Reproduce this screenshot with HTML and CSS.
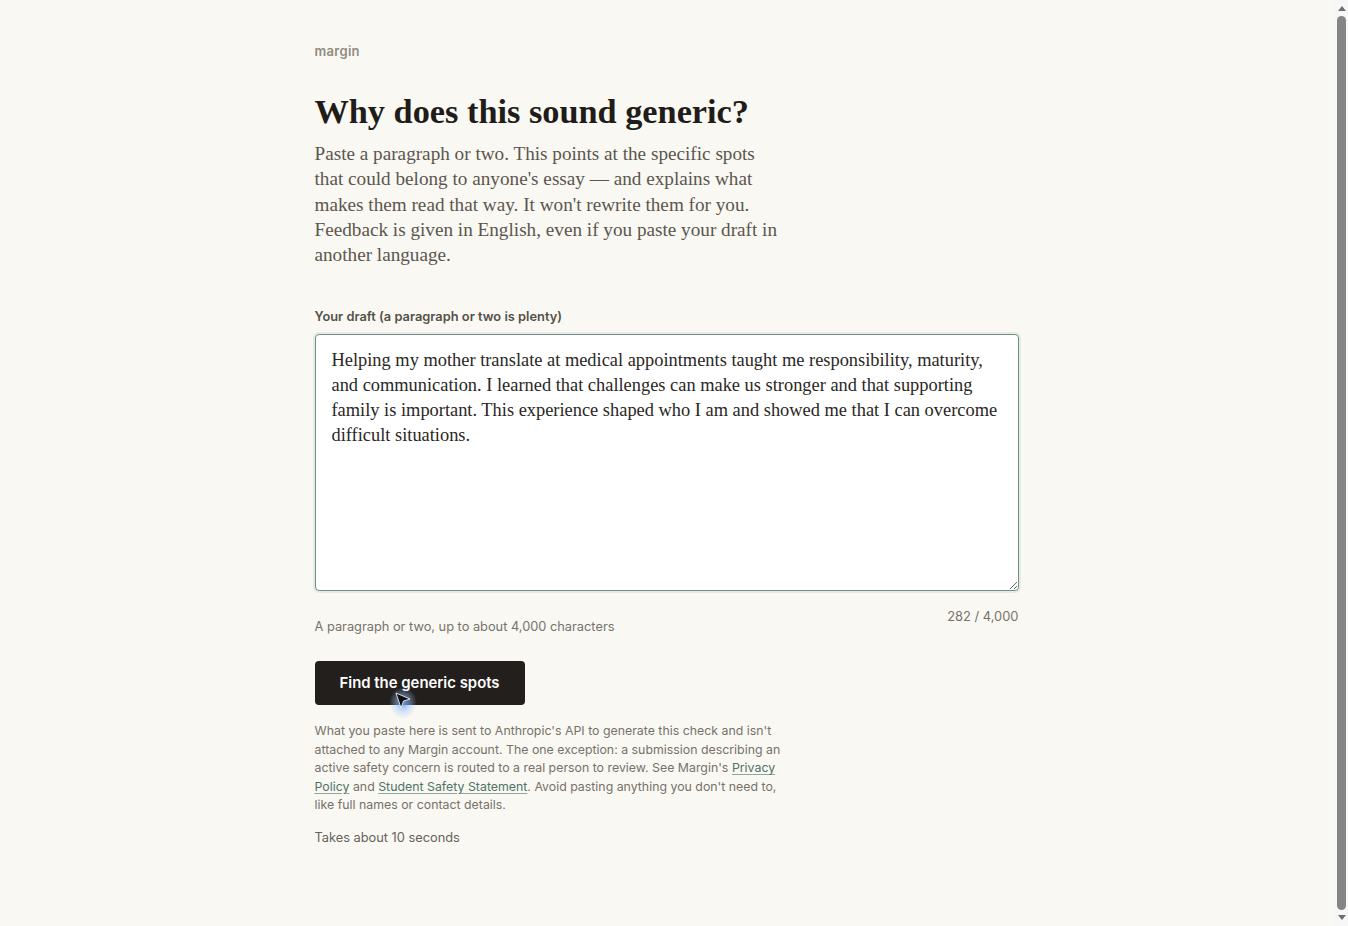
FILE: index.html
```html
<!DOCTYPE html>
<html lang="en">
<head>
<meta charset="utf-8">
<title>Why does this sound generic? — margin</title>
<link rel="stylesheet" href="styles.css">
</head>
<body>
<main class="page">
  <div class="brand">margin</div>
  <h1 class="title">Why does this sound generic?</h1>
  <p class="intro">Paste a paragraph or two. This points at the specific spots that could belong to anyone's essay — and explains what makes them read that way. It won't rewrite them for you. Feedback is given in English, even if you paste your draft in another language.</p>

  <form class="form">
    <label class="label" for="draft">Your draft (a paragraph or two is plenty)</label>
    <textarea id="draft" class="draft">Helping my mother translate at medical appointments taught me responsibility, maturity, and communication. I learned that challenges can make us stronger and that supporting family is important. This experience shaped who I am and showed me that I can overcome difficult situations.</textarea>
    <div class="meta">
      <span class="hint">A paragraph or two, up to about 4,000 characters</span>
      <span class="count">282 / 4,000</span>
    </div>
    <div class="action">
      <button type="button" class="btn">Find the generic spots</button>
      <svg class="pointer" width="30" height="34" viewBox="0 0 30 34" aria-hidden="true">
        <defs>
          <radialGradient id="glow" cx="50%" cy="50%" r="50%">
            <stop offset="0" stop-color="#5d9cff" stop-opacity="0.9"/>
            <stop offset="0.55" stop-color="#9cc4ff" stop-opacity="0.4"/>
            <stop offset="1" stop-color="#9cc4ff" stop-opacity="0"/>
          </radialGradient>
        </defs>
        <ellipse cx="14" cy="17" rx="14" ry="16" fill="url(#glow)"/>
        <path d="M7 7 L21 13 L14.5 15 L12 22 Z" fill="#111" stroke="#fff" stroke-width="0.8" stroke-linejoin="round"/>
      </svg>
    </div>
  </form>

  <p class="privacy">What you paste here is sent to Anthropic's API to generate this check and isn't attached to any Margin account. The one exception: a submission describing an active safety concern is routed to a real person to review. See Margin's <a href="#">Privacy Policy</a> and <a href="#">Student Safety Statement</a>. Avoid pasting anything you don't need to, like full names or contact details.</p>
  <p class="eta">Takes about 10 seconds</p>
</main>
<div class="scrollbar" aria-hidden="true">
  <span class="arrow up"></span>
  <span class="thumb"></span>
  <span class="arrow down"></span>
</div>
</body>
</html>
```

FILE: styles.css
```css
* { box-sizing: border-box; }

html, body {
  margin: 0;
  padding: 0;
  background: #faf8f2;
}

body {
  font-family: Inter, "Liberation Sans", sans-serif;
  color: #222;
  padding-right: 15px;
}

.page {
  max-width: 704px;
  margin: 0 auto;
  padding: 43px 0 90px;
}

.brand {
  font-size: 13px;
  font-weight: 600;
  color: #8f8b82;
  letter-spacing: 0.3px;
  line-height: 16px;
}

.title {
  font-family: "Liberation Serif", serif;
  font-size: 34.3px;
  font-weight: 700;
  color: #1f1c19;
  line-height: 42px;
  margin: 31px 0 0;
}

.intro {
  font-family: "Liberation Serif", serif;
  font-size: 19.2px;
  line-height: 25.3px;
  color: #5a564f;
  max-width: 470px;
  margin: 9px 0 0;
}

.form {
  display: flex;
  flex-direction: column;
  margin-top: 42px;
}

.label {
  font-size: 12.85px;
  font-weight: 600;
  color: #54514b;
  line-height: 16px;
  margin-bottom: 9px;
}

.draft {
  display: block;
  width: 100%;
  height: 257px;
  padding: 13px 16px;
  font-family: "Liberation Serif", serif;
  font-size: 18.4px;
  line-height: 24.7px;
  color: #2a2724;
  background: #fff;
  border: 1px solid #6e9088;
  border-radius: 4px;
  box-shadow: 0 0 0 2px rgba(110, 144, 136, 0.12);
  outline: none;
  resize: vertical;
}

.meta {
  display: flex;
  justify-content: space-between;
  align-items: flex-start;
  margin-top: 18px;
  font-size: 12.8px;
  line-height: 16px;
  color: #77736b;
}

.count { font-size: 12.9px; }

.hint { margin-top: 10px; }

.action {
  position: relative;
  margin-top: 26px;
}

.btn {
  height: 44px;
  padding: 0 25px;
  background: #221f1c;
  color: #fff;
  border: none;
  border-radius: 4px;
  font-family: Inter, "Liberation Sans", sans-serif;
  font-size: 14.9px;
  font-weight: 600;
  cursor: pointer;
}

.pointer {
  position: absolute;
  left: 74px;
  top: 25px;
}

.privacy {
  font-size: 12.35px;
  line-height: 18.5px;
  color: #76726a;
  max-width: 475px;
  margin: 17px 0 0;
}

.privacy a {
  color: #4f7266;
  text-decoration: underline;
  text-decoration-color: #8fa89f;
  text-underline-offset: 2px;
}

.eta {
  font-size: 12.8px;
  line-height: 16px;
  color: #66625b;
  margin: 15px 0 0;
}

/* browser scrollbar as seen in the screenshot */
.scrollbar {
  position: fixed;
  top: 0;
  right: 0;
  width: 15px;
  height: 100vh;
  background: #f7f7f7;
  display: flex;
  flex-direction: column;
  align-items: center;
}

.scrollbar .thumb {
  flex: 1;
  width: 9px;
  margin: 5px 0 5px 2px;
  background: #858585;
  border-radius: 5px;
}

.scrollbar .arrow {
  width: 0;
  height: 0;
  margin-left: 2px;
  border-left: 4px solid transparent;
  border-right: 4px solid transparent;
}

.scrollbar .up {
  margin-top: 6px;
  border-bottom: 5px solid #6e6e6e;
}

.scrollbar .down {
  margin-bottom: 6px;
  border-top: 5px solid #6e6e6e;
}
```
